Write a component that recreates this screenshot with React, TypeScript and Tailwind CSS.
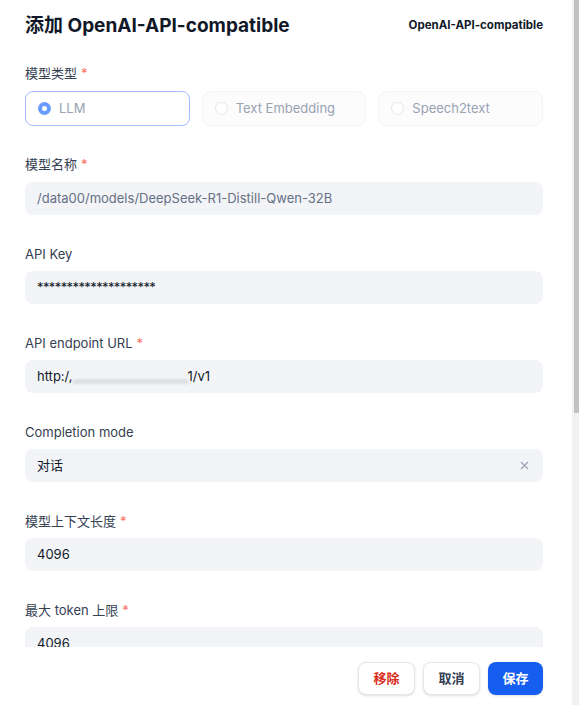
import { X } from "lucide-react";

const font = { fontFamily: "Inter, 'Noto Sans CJK SC', sans-serif" };

const Label = ({ text, required }: { text: string; required?: boolean }) => (
  <div className="flex items-center h-5 text-[13px] text-[#354052]">
    {text}
    {required && <span className="ml-1 text-[#f97066]">*</span>}
  </div>
);

const Field = ({ children }: { children: React.ReactNode }) => (
  <div className="flex items-center h-[33px] px-3 rounded-lg bg-[#f2f4f7] text-[13px] text-[#101828]">
    {children}
  </div>
);

const Radio = ({ label, active }: { label: string; active?: boolean }) => (
  <div
    className={
      active
        ? "flex-1 flex items-center gap-2 h-[35px] px-3 rounded-lg border border-[#a4bcfd] bg-white"
        : "flex-1 flex items-center gap-2 h-[35px] px-3 rounded-lg border border-[#f2f4f7] bg-[#fcfcfd]"
    }
  >
    {active ? (
      <span className="w-[13px] h-[13px] rounded-full border-[4px] border-[#6b9bff] bg-white" />
    ) : (
      <span className="w-[13px] h-[13px] rounded-full border border-[#e4e7ec] bg-white" />
    )}
    <span className="text-[13px] text-[#98a2b3]">{label}</span>
  </div>
);

const App = () => {
  return (
    <div className="flex w-[579px] h-[705px] bg-white overflow-hidden" style={font}>
      <div className="flex-1 flex flex-col">
        {/* Scrollable form */}
        <div className="flex-1 overflow-hidden pl-[25px] pr-[29px] pt-[14px]">
          <div className="flex items-center justify-between h-6">
            <h2 className="text-[19px] font-bold text-[#101828]">添加 OpenAI-API-compatible</h2>
            <span className="text-[11.5px] font-bold text-[#101828]">OpenAI-API-compatible</span>
          </div>

          <div className="mt-[26px]">
            <Label text="模型类型" required />
            <div className="flex gap-3 mt-[7px]">
              <Radio label="LLM" active />
              <Radio label="Text Embedding" />
              <Radio label="Speech2text" />
            </div>
          </div>

          <div className="mt-[29px]">
            <Label text="模型名称" required />
            <div className="mt-[7px]">
              <Field>
                <span className="text-[#667085]">/data00/models/DeepSeek-R1-Distill-Qwen-32B</span>
              </Field>
            </div>
          </div>

          <div className="mt-[30px]">
            <Label text="API Key" />
            <div className="mt-[6px]">
              <Field>
                <span className="tracking-[-0.6px]">********************</span>
              </Field>
            </div>
          </div>

          <div className="mt-[30px]">
            <Label text="API endpoint URL" required />
            <div className="mt-[6px]">
              <Field>
                <span>http:/,</span>
                <span className="inline-block w-[115px] h-[5px] mt-[10px] bg-[#dcdfe4] blur-[1px]" />
                <span>1/v1</span>
              </Field>
            </div>
          </div>

          <div className="mt-[30px]">
            <Label text="Completion mode" />
            <div className="mt-[6px]">
              <Field>
                <span className="flex-1">对话</span>
                <X className="w-[13px] h-[13px] text-[#98a2b3]" strokeWidth={2} />
              </Field>
            </div>
          </div>

          <div className="mt-[30px]">
            <Label text="模型上下文长度" required />
            <div className="mt-[6px]">
              <Field>4096</Field>
            </div>
          </div>

          <div className="mt-[30px]">
            <Label text="最大 token 上限" required />
            <div className="mt-[6px]">
              <Field>4096</Field>
            </div>
          </div>
        </div>

        {/* Footer */}
        <div className="flex justify-end gap-2 h-[58px] pl-[25px] pr-[29px] pt-[15px] bg-white">
          <button className="h-[33px] w-[57px] rounded-lg border border-[#e4e7ec] bg-white shadow-sm text-[13px] font-semibold text-[#d92d20]">
            移除
          </button>
          <button className="h-[33px] w-[57px] rounded-lg border border-[#e4e7ec] bg-white shadow-sm text-[13px] font-semibold text-[#354052]">
            取消
          </button>
          <button className="h-[33px] w-[55px] rounded-lg bg-[#155eef] shadow-sm text-[13px] font-semibold text-white">
            保存
          </button>
        </div>
      </div>

      {/* Scrollbar */}
      <div className="w-[7px] bg-[#f1f1f1] flex flex-col">
        <div className="h-[413px] ml-[2px] bg-[#c1c1c1]" />
      </div>
    </div>
  );
};

export default App;
